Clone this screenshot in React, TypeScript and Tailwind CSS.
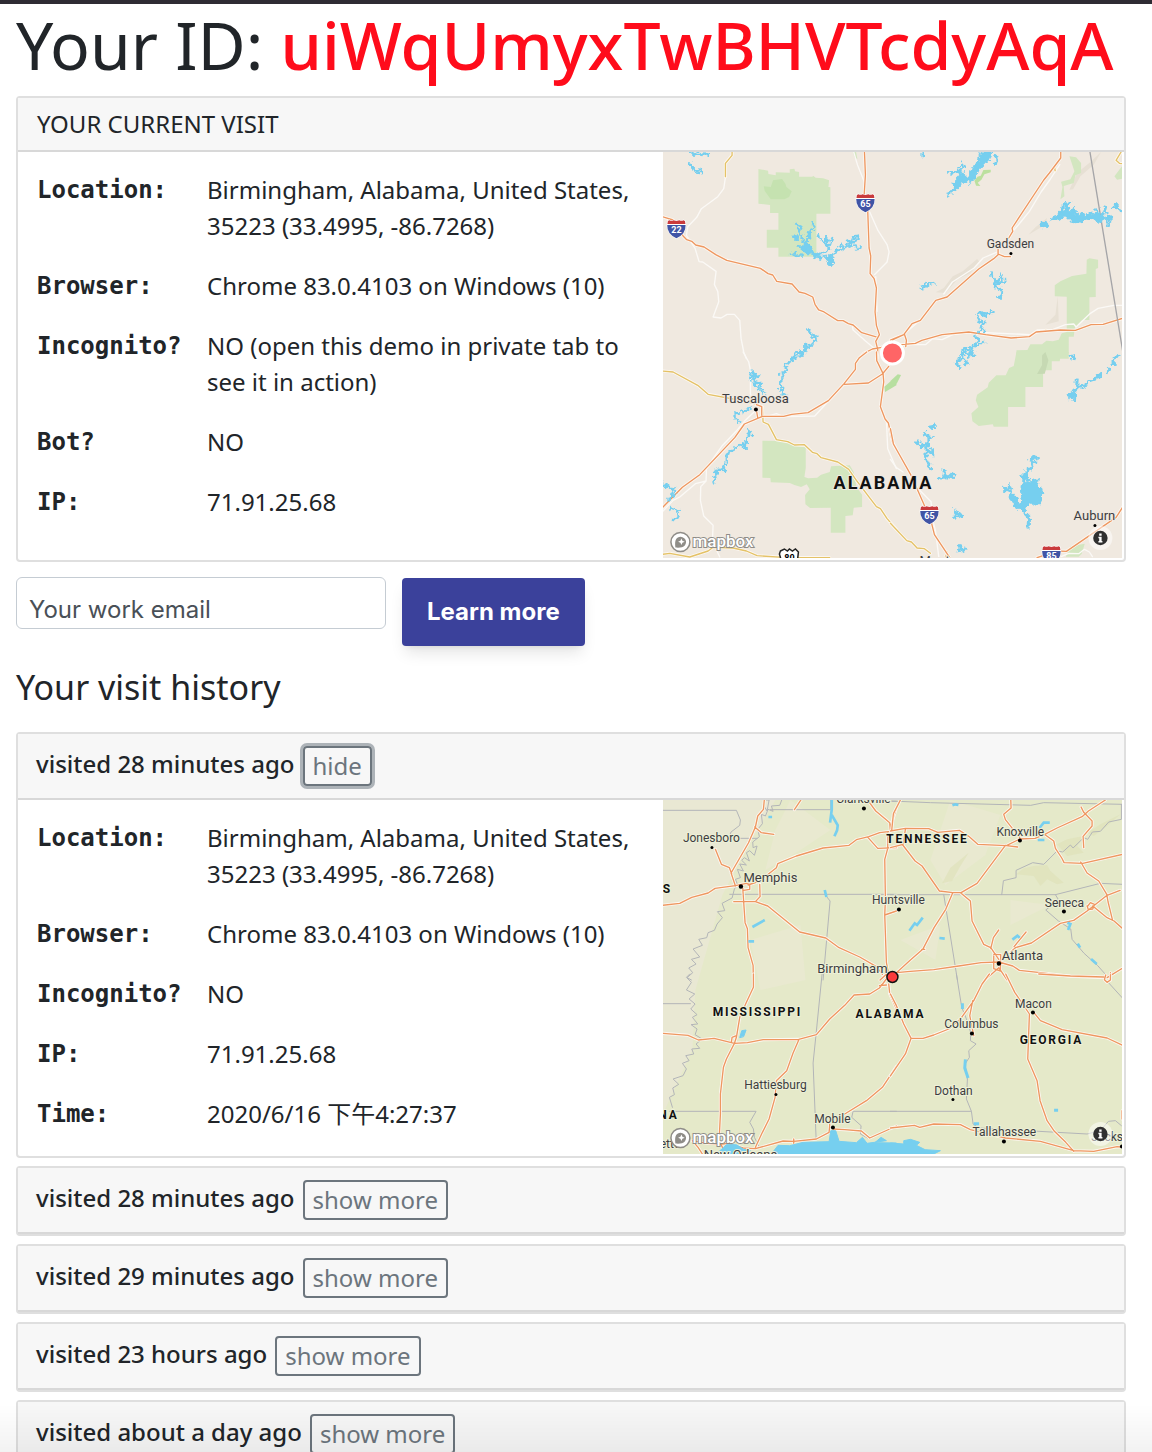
import { useState, type ReactNode } from "react";

/* ---------- map drawing helpers ---------- */

function Tile({ x, y, children }: { x: number; y: number; children: ReactNode }) {
  return (
    <g transform={`translate(${x} ${y}) scale(0.33333)`} fill="none" strokeLinejoin="round" strokeLinecap="round">
      {children}
    </g>
  );
}

function Roads({ d, color = "#ee9760" }: { d: string; color?: string }) {
  return (
    <>
      <path d={d} stroke="#fdf8f2" strokeWidth="9" />
      <path d={d} stroke={color} strokeWidth="4" />
    </>
  );
}

function Minor({ d }: { d: string }) {
  return <path d={d} stroke="#fbf9f6" strokeWidth="4" />;
}

function Shoreline() {
  return (
    <filter id="shoreline" filterUnits="userSpaceOnUse" x="-20" y="-20" width="800" height="720">
      <feTurbulence type="fractalNoise" baseFrequency="0.07" numOctaves="2" seed="4" />
      <feDisplacementMap in="SourceGraphic" scale="26" xChannelSelector="R" yChannelSelector="G" />
    </filter>
  );
}

function Water({ d, w = 5, rough = false }: { d: string; w?: number; rough?: boolean }) {
  return (
    <path d={d} stroke="#76cfef" strokeWidth={w} strokeLinejoin="miter" strokeLinecap="butt" filter={rough ? "url(#shoreline)" : undefined} />
  );
}

function Lake({ d, rough = false }: { d: string; rough?: boolean }) {
  return <path d={d} fill="#76cfef" stroke="#76cfef" strokeWidth="3" strokeLinejoin="miter" filter={rough ? "url(#shoreline)" : undefined} />;
}

function Park({ d, color = "#d3e6c0" }: { d: string; color?: string }) {
  return <path d={d} fill={color} />;
}

function Label({ x, y, text, size = 12, halo }: { x: number; y: number; text: string; size?: number; halo: string }) {
  return (
    <text x={x} y={y} fontSize={size} textAnchor="middle" fill="#3d3d40" stroke={halo} strokeWidth="2" paintOrder="stroke">
      {text}
    </text>
  );
}

function StateLabel({ x, y, text, size = 12, space = 1.8, halo }: { x: number; y: number; text: string; size?: number; space?: number; halo: string }) {
  return (
    <text x={x} y={y} fontSize={size} fontWeight="700" letterSpacing={space} textAnchor="middle" fill="#111" stroke={halo} strokeWidth="2" paintOrder="stroke">
      {text}
    </text>
  );
}

function Shield({ x, y, text }: { x: number; y: number; text: string }) {
  return (
    <g transform={`translate(${x} ${y})`}>
      <path d="M-9-8.500L-7-9.500Q-5-8-3-9.500L0-8.500L3-9.500Q5-8 7-9.500L9-8.500L9.800-4Q10 5 0 10Q-10 5-9.800-4Z" fill="#fff" />
      <path d="M-8.500-8L-7-8.800Q-5-7.500-3-8.800L0-8L3-8.800Q5-7.500 7-8.800L8.500-8L9-5H-9Z" fill="#c93a3c" />
      <path d="M-9.200-4H9.200Q9.500 5 0 9.300Q-9.500 5-9.200-4Z" fill="#4054a5" />
      <text y="4" fontSize="9" fontWeight="700" textAnchor="middle" fill="#fff">
        {text}
      </text>
    </g>
  );
}

function MapChrome({ y }: { y: number }) {
  return (
    <>
      <g transform={`translate(680 ${y})`}>
        <circle r="9.500" fill="#fff" stroke="#8f8d88" strokeWidth="1.500" />
        <path d="M-5 5.500C-5.500 1-5.500-2-3-4.200A5.400 5.400 0 0 1 4.600 3.200C2.500 5.500-1 5.900-5 5.500Z" fill="#8f8d88" />
        <path d="M1-3.600L2-1.300L4.300-.3L2 .8L1 3L0 .8L-2.300-.3L0-1.300Z" fill="#fff" />
      </g>
      <text x="692" y={y + 5} fontSize="17" fontWeight="500" fill="#fff" stroke="#8f8d88" strokeWidth="2" paintOrder="stroke">
        mapbox
      </text>
      <g transform={`translate(1100 ${y - 4})`}>
        <circle r="12" fill="#fff" fillOpacity="0.5" />
        <circle r="7.200" fill="#303030" />
        <path d="M-1.200-4.500H1.200V-2.300H-1.200ZM-2-1.200H1.200V3H2V4.500H-2V3H-1.200V.3H-2Z" fill="#fff" />
      </g>
    </>
  );
}

function StateMap() {
  const halo = "#f0e9e0";
  return (
    <svg viewBox="662 152 460 406" preserveAspectRatio="xMidYMid slice" className="block h-[406px] w-full" fontFamily="Roboto, sans-serif" role="img" aria-label="Map of Alabama">
      <Shoreline />
      <rect x="662" y="152" width="460" height="406" fill="#f0e9e0" />
      <Tile x={656} y={148}>
        <Park d="M306 63L335 68L336 78L358 82V73L400 74V64L414 62L416 70L428 72V86H468L470 83L478 89L500 91L518 97L516 117L522 118V197H480V326H366V299H331V245H366V195H341V171L306 167Z" />
        <Park color="#c5e2b0" d="M322 115L343 117L350 97L377 93L387 107L390 117L406 130L398 147L384 154H343L325 129Z" />
        <Park d="M590 12H599L603 34L594 28Z" />
        <Minor d="M207 88L202 122L184 146L135 182L121 208L94 236L90 262L116 301L128 341L139 342L179 370L174 410L184 430L187 461L170 507L194 510L212 499H234L250 517L254 572L262 612L270 632" />
        <Minor d="M592 12L603 50L625 105M640 192L665 248L692 290L698 312L692 342L654 380M588 536L590 546L628 580L652 600M658 386L662 490" />
        <Roads color="#e4c267" d="M227 8V22L207 46V86" />
        <Roads d="M18 206L50 216L80 264L91 275L106 280L118 291L143 297L178 320L211 337L312 361L335 377L349 381L361 400L407 408L428 432L446 436L469 447L476 470L487 486L503 492L544 518H560L576 527L590 531L616 554L664 568" />
        <Roads d="M624 8L627 80L623 145M634 190L638 300L643 324L641 377L653 392L660 420L656 492L660 532L669 560L658 580L664 605L662 632M608 632L622 616L648 603L676 598L720 568" />
        <Lake rough d="M408 265L420 263L427 270L418 276ZM430 300L448 288L466 301L476 318L484 313L490 325L477 335L470 322L450 315ZM500 324L523 327L535 338L520 350L510 338Z" />
        <Water rough w={7} d="M415 222L424 237L434 242L429 259L440 263L438 276L455 294L467 307M470 225L462 225M472 225L469 248L457 256L459 273L445 285L451 300L440 306M485 254L490 271L503 281L512 292L520 302L511 306L486 325M510 261L509 280L526 272L522 290L510 292M516 335L533 322L541 310L553 305L546 292L554 287L561 298L580 292L589 279L601 278L607 266L592 268L584 281L569 286M587 293L600 292L602 304L618 301M614 290L607 303M404 320L412 315L420 323L426 319L440 320" />
        <Water rough w={7} d="M96 15L106 12L113 20L123 14L136 20L145 15L161 22M101 43L105 58L112 60L119 73L136 76M109 47L105 66M114 61L130 68" />
        <Water rough w={8} d="M455 542L462 550L466 562L476 567L479 580L461 590L457 600L447 593L447 606L434 607L440 620L428 616L414 617L412 630" />
      </Tile>
      <Tile x={890} y={148}>
        <path d="M136 433L160 420L187 385L217 370L260 333L268 342L240 375L200 395L165 435ZM414 260L436 237L470 210L465 230ZM537 125L560 75L600 42L632 12L610 50L570 85L548 124ZM465 530L495 500L502 445L505 520Z" fill="#e7e0d4" />
        <Park d="M537 25L557 28L572 45V75L555 82L550 105L520 114L522 145L510 154L516 117L512 101L540 94L552 70L543 43ZM672 85L697 52V92L680 95Z" />
        <Park d="M589 335L597 331L623 335V360L616 363V447L597 448V516H575L553 540L550 566H535V600V632H378V607L411 606L420 589H455L468 578L487 580L505 575L514 556L529 552V446L493 445V412L510 400L545 384L588 377Z" />
        <Minor d="M508 50L480 93L452 132L417 190L391 222L371 246M318 313L278 330L251 360L186 402L160 438M51 550L85 520L130 466M45 590L105 590L126 572L155 575L187 560L240 552L420 560L440 546L488 544L525 530L550 528L557 537L600 496L623 481L670 472H697" />
        <Roads color="#e4c267" d="M692 12L677 37L687 46L697 47M493 60L494 68M435 553L467 547" />
        <Roads d="M511 8V30L477 75L460 96L365 240L367 250L355 270M323 302V320L310 332L265 363L170 447L136 457L90 517L65 527L40 560L6 576M323 318L342 326H360M0 576L42 559L48 577L46 596M32 590L75 586L94 577L155 560L235 552L286 560L362 570L417 566L437 552L510 546L555 547L602 530L638 529L697 511" />
        <path d="M598 8L697 610" stroke="#a5a5a8" strokeWidth="4" />
        <Lake rough d="M274 12H308L300 30L286 45L266 65L258 83L247 97L215 105L198 126L171 148L174 136L190 117L188 104L202 92L200 80L210 72L219 88L235 87L242 60L266 40Z" />
        <Park color="#bce09f" d="M252 98L261 86L271 83L279 66L301 65V73L282 79L273 95L262 104L270 114L257 113Z" />
        <Water rough w={8} d="M170 73L201 72L225 61L215 45L204 59M225 92L242 106M315 18L321 45L311 48M97 12V28" />
        <Lake rough d="M450 228L460 221L476 228L466 242L450 237ZM510 190L526 188L521 170L534 173L536 193L551 175L557 200L570 198L585 203L606 193L628 200L640 181L637 201L662 204V220L644 211L630 220L612 216L588 213L571 222L548 225L535 209L512 212Z" />
        <Water rough w={9} d="M480 217L505 209L518 174L541 164M640 173L648 195M664 175L684 177L694 194M646 213L660 231M625 202L614 182M580 211L594 198" />
        <Water rough w={8} d="M90 418L100 409L111 413L129 406M96 424L111 418M303 370L304 387L315 402L314 420L335 424L331 448L320 448M316 402L325 390L323 407L339 407L337 388M306 481L290 506L265 492L260 506L270 522H281L277 546L264 550M250 565L264 575L254 594L235 603L219 604L213 625M260 596L283 580M235 632L244 606" />
      </Tile>
      <Tile x={656} y={352}>
        <Park d="M318 266L390 267L414 281L448 286V348L444 375L455 379L482 377L494 368L520 360L524 343L580 340L592 360L600 405L617 428V465L592 467L589 490L567 492V542H523V467L461 468L447 457L446 429L460 412L451 397L434 405L414 399L400 393L343 391L342 378L318 377Z" />
        <Minor d="M260 0L277 30L282 55V124L292 157M296 177L264 208L239 238L196 283L170 320L150 352L149 387L133 404L132 446L142 492L170 520L168 568L190 615M149 387L117 395L70 435L50 445L20 477M332 193L360 185L382 194L475 192L530 132M690 208L694 290L720 350" />
        <Roads color="#e4c267" d="M18 57L50 60L124 100L155 127L230 141L300 156M318 165L320 210L336 217L360 263L394 269L414 279L444 278L468 301L482 305L494 317L544 330L577 352L600 385L637 434L660 464L672 470L692 500L720 532M18 607L40 604L100 615L155 597L170 586L230 588L270 597L302 611L380 616L520 617" />
        <Roads d="M18 467L78 406L130 368L235 257L264 216L302 200L318 193H382L406 187L455 182L516 146L563 95L597 52V34L609 17L631 0M564 97L636 93L678 66L697 43M660 0L661 26L680 65L682 90L672 164L686 201L696 213L708 270L720 292M304 198L301 180M300 158L316 164V190" />
        <Water rough w={7} d="M279 58L290 66L286 74L302 70L290 85L303 90L309 99L320 109L327 128M284 88L294 97L312 93L306 106L318 121M450 5L430 0L426 13L413 12L410 24L394 35L384 43L388 56L375 72L374 112L384 127L372 128M286 170L261 175L249 184L237 182L238 199L246 213M275 222L277 244L289 247M279 244L272 258L275 271L264 273L267 287L248 279L235 287L229 296L211 308V329L200 344L203 354L178 353L180 373L171 378L178 398M18 391L37 407L54 409L43 425L53 430L44 444L33 439M37 475L46 468L67 475L59 501L49 501" />
        <Park color="#b7dfa0" d="M686 120L684 104L700 90L720 80V100Z" />
      </Tile>
      <Tile x={890} y={352}>
        <Park d="M378 0H535V4L510 12L508 28H484V55H458V105H405V165H353V224H310L307 217L265 222L246 208L243 184L264 165L256 145L260 128L292 106L295 92L318 70H346L356 48L370 42Z" />
        <path d="M465 0L474 25L463 65L440 66L455 39V10Z" fill="#c6d9b3" />
        <Park color="#b7dfa0" d="M0 87L22 67L32 69L20 93L0 109Z" />
        <Park d="M526 614L540 583L583 575L574 605L565 614Z" />
        <Minor d="M0 322L18 347L38 360M88 415L122 449L125 498L135 535L145 614M512 614L535 604L565 605L582 592L597 600L606 614" />
        <Roads color="#e4c267" d="M0 514L49 566L63 570L80 588L102 590L120 604M172 600L165 614" />
        <Roads d="M0 230L9 276L62 370L103 463M123 512L132 548L178 617M697 465L677 496L528 598L502 597M460 610L440 617" />
        <Lake rough d="M531 126L546 118L556 118L562 128L557 145L546 139L536 140ZM380 468L397 435L392 407L397 385L414 392L425 378L444 382L440 400L455 410L452 445L440 460L420 455L408 470L400 483L380 465L359 446V435L378 440L384 455Z" />
        <Water rough w={9} d="M551 116L572 102L587 97L601 86L620 79L634 66M561 77L559 102L572 110M653 60L655 47M668 39V27L683 8M549 25L545 8M139 219L124 222L128 236M102 237L106 250L124 256L110 270L109 290L127 305V291M75 266L90 281L111 279M111 295L108 325L115 343L124 351M143 380L162 372L175 375L182 368L191 376M151 360L162 362L167 382M190 471L202 487L221 491M189 497L217 490M447 322L428 314L421 324L433 329L419 350L404 363L410 380L392 367M395 370L407 395M338 412L352 413L357 424L373 428M350 393L365 412M360 428L380 445M401 479L415 493L413 530M206 602L209 587L224 591L214 604M255 5L234 9L221 0L217 22L235 37M220 18L196 26L204 45" />
      </Tile>
      <Label x={1010} y={248} text="Gadsden" halo={halo} />
      <circle cx="1010.500" cy="253.500" r="1.500" />
      <Label x={755} y={403} text="Tuscaloosa" size={13} halo={halo} />
      <circle cx="755.500" cy="409.500" r="2" />
      <Label x={1094} y={520} text="Auburn" size={13} halo={halo} />
      <circle cx="1094.500" cy="525.500" r="1.500" />
      <StateLabel x={883} y={489} text="ALABAMA" size={18} space={2} halo={halo} />
      <Label x={956} y={565} text="Montgomery" size={13} halo={halo} />
      <Shield x={676} y={229} text="22" />
      <Shield x={865} y={203} text="65" />
      <Shield x={929} y={515} text="65" />
      <Shield x={1051} y={555} text="85" />
      <path d="M780 551L784 549L787 551L789 549L792 551L795 549L798 552L797 561H781L779 554Z" fill="#fff" stroke="#222" strokeWidth="1.500" />
      <text x="789" y="561" fontSize="9" fontWeight="700" textAnchor="middle">80</text>
      <circle cx="892" cy="353" r="11" fill="#ff6566" stroke="#fff" strokeWidth="3" />
      <MapChrome y={542} />
    </svg>
  );
}

function RegionMap() {
  const halo = "#edf0d8";
  const border = "#b3b5b8";
  return (
    <svg viewBox="662 800 460 354" preserveAspectRatio="xMidYMid slice" className="block h-[354px] w-full" fontFamily="Roboto, sans-serif" role="img" aria-label="Map of the southeastern United States">
      <rect x="662" y="800" width="460" height="354" fill="#e5e9c9" />
      <path d="M662 800H775L745 850L722 895L695 990L692 1050L662 1115Z" fill="#e9e8d3" />
      <path d="M790 800L830 830L800 850L765 870L775 830ZM950 800L1000 815L985 855L945 885L930 860ZM750 940L800 925L805 980L760 990ZM900 940L940 925L935 960ZM1010 900L1050 905L1010 925Z" fill="#e9e9d0" />
      <Tile x={656} y={796}>
        <g stroke={border} strokeWidth="3">
          <path d="M18 43H240L252 72L250 88L224 108L216 125M247 127H302M342 41H523V12M702 16H720M220 295H720M505 295L521 315L500 552" />
          <path d="M376 12L370 28L345 30L350 46L335 40L327 60L315 55L318 83L304 100L309 122L289 138L290 155L302 150L294 178L280 164L270 170L279 195L264 185L256 193L270 207L250 204L261 225L243 220L252 245L237 250L244 267L234 279L227 306L197 322L205 344L183 347L198 365L182 384L174 403L155 410L151 425L127 430L138 448L110 459L130 483L105 490L119 504L97 516L109 530L92 545L105 552" />
        </g>
        <path d="M330 12L338 12L332 45L321 27" stroke={border} strokeWidth="3" />
        <Roads d="M324 8L321 40L304 60L297 93L276 141L224 231L237 270M177 160L195 205L219 215L226 234M295 93L315 110L352 115M436 8L414 41M18 328L70 322L106 304L155 291L176 277L237 269L270 262L280 265V280L261 283M275 267L310 255L360 215L364 203L420 180L500 156L578 148L600 131L637 122L670 110L702 106M310 265L311 302L297 317H232M259 276L266 380L273 398L275 455L290 508L291 552M297 317L334 330L430 408L508 426L548 455L610 483L660 512L678 535M635 14L658 45L700 80L702 106M720 36L703 90M635 125L664 157L720 155M694 110V157L685 190L687 310L685 357L690 500L695 525M685 357L720 345M671 552L690 535" />
        <Water w={8} d="M526 12V40L521 80M526 57L544 88L542 103L534 121M288 393L325 372M336 63H347M276 436H293M505 282L510 303" />
      </Tile>
      <Tile x={890} y={796}>
        <path d="M377 235L400 217L430 210L470 207L480 225L520 260L500 265L470 250L450 270L430 240ZM500 145L530 130L580 120L560 150L580 170L530 180ZM590 110L630 85L690 55L650 90L610 120ZM155 262L180 215L235 170L210 210L185 255Z" fill="#dde1b7" opacity="0.6" />
        <g stroke={border} strokeWidth="3">
          <path d="M0 15L120 20L421 28L460 20L697 25M0 296H495L504 311L485 319L480 331L466 342L504 375L541 399L545 430L581 472L622 509L660 552M160 296L201 552" />
          <path d="M334 296L339 254L377 245V223L427 200L460 205L500 165L517 168L540 147L548 156L580 125L592 130L606 108L630 106L655 78L693 70V25M495 296L630 262L697 265" />
        </g>
        <Roads d="M32 8L9 53L4 102M0 105L45 97L115 98L142 109L207 103L235 121L262 145L348 149L388 129L434 127L463 115L500 96L575 62L594 45L645 12M361 8L362 36L340 55L345 71L388 125M572 33L580 49L605 75V90L578 121L580 155M348 149L382 153M465 117L490 135L495 157L514 186L521 200L577 202L697 175M571 198L590 231L625 255L649 295L653 318L666 371M37 147L74 195L95 210L147 285L187 290H212L260 262L345 148M212 292L240 315L245 375L280 445L301 455L325 490M187 290L166 340L131 395L97 460L60 492L18 530M0 155L38 145L45 99M301 458L309 425L325 402M371 452L407 408M324 500L375 455L423 441L510 382L550 373L590 345L650 298L689 283M592 330L600 320L612 325L607 339L594 341L590 330M607 330L650 365L671 375L697 398M18 530L60 526L130 521L205 510L272 500L325 498L367 510L387 523L450 530L540 541L650 545L697 516M94 460H103M284 552L325 515L350 552M310 475L331 476L330 525L310 518V480M660 530V552" />
        <Water w={8} d="M186 28L195 25L204 27M447 96L460 80L478 80M442 132H462M57 404L73 382L80 387L97 365M147 426L163 428M366 431L381 419L388 425M531 380L540 384L533 402M562 443L569 455M602 489L619 504" />
      </Tile>
      <Tile x={656} y={974}>
        <g stroke={border} strokeWidth="3">
          <path d="M18 89H102M497 0L479 180L470 267L479 492M40 412H299L280 445L291 465L294 490L307 517M720 412H590L586 430L614 455L612 480L633 492" />
          <path d="M100 0L90 10L105 25L90 48L115 60L98 75L116 90L103 105L122 122L108 130L124 150L104 152L122 165L116 182L137 195L119 210L130 223L106 225L112 240L88 245L98 260L78 268L90 285L80 305L50 315L67 331L49 342L54 362L39 370L48 400" />
        </g>
        <Roads d="M291 0V40L270 85L250 130L240 190L234 208L210 255L201 280L192 360V420L188 500L204 532M18 178L95 184L126 198L173 193L234 208L273 206L320 197L427 196L480 182L520 135L565 94L593 63L640 60L669 42L690 15M427 198L410 237L391 290L360 320L356 370L338 435L318 475L297 520M225 204L227 190L240 185M669 35L690 33M697 30L700 60L720 104M720 277L678 340L630 380L565 420M530 465L565 467L615 471L640 492L720 456M520 450L518 475L480 495L412 502L380 501L297 524L260 522L214 508L200 510L152 508L108 500L125 520L138 540M412 495V508" />
        <Lake d="M250 190L256 170L269 168L262 187ZM180 540L210 512H240L262 526L282 530L270 540H345L365 514L400 515L440 505L518 503L523 470H538L548 502L600 506L618 490L632 508L690 500L674 490L655 506L720 507V540Z" />
      </Tile>
      <Tile x={890} y={974}>
        <g stroke={border} strokeWidth="3">
          <path d="M198 0L214 100L228 135L241 176L240 200L257 210L235 230L237 250L224 270L231 315L228 375L243 412L248 450L265 462L590 480L630 470L654 442L675 440L693 455M0 412H242M656 28L697 73" />
        </g>
        <Roads d="M297 0L275 30L250 80L210 135L175 165L130 183L98 193H62L40 150L18 95L0 60M62 193L45 240L0 306M346 0L373 55L417 120L412 255L440 320L449 380L470 440L492 472L526 505L550 532M430 115L450 140L515 167L650 192L697 214M247 80L238 125L250 185M445 0L540 6L640 9M646 3L642 17L650 25L660 18V2M0 462L72 454L88 460L130 450L210 452L240 467L345 492L450 502L550 530L610 532L680 518L697 520M695 410V435" />
        <Water w={9} d="M216 88V105M225 256L223 282L233 312M250 449H266M491 409H503" />
        <Lake d="M0 540V507L40 510V500L60 496L88 505L78 514L104 527L150 530L130 540Z" />
      </Tile>
      <Label x={863} y={803} text="Clarksville" halo={halo} />
      <Label x={711} y={842} text="Jonesboro" halo={halo} />
      <Label x={770} y={882} text="Memphis" size={13} halo={halo} />
      <Label x={898} y={904} text="Huntsville" halo={halo} />
      <Label x={1020} y={836} text="Knoxville" halo={halo} />
      <Label x={1064} y={907} text="Seneca" halo={halo} />
      <Label x={1022} y={960} text="Atlanta" size={13} halo={halo} />
      <Label x={852} y={973} text="Birmingham" size={13} halo={halo} />
      <Label x={1033} y={1008} text="Macon" halo={halo} />
      <Label x={971} y={1028} text="Columbus" halo={halo} />
      <Label x={953} y={1095} text="Dothan" halo={halo} />
      <Label x={775} y={1089} text="Hattiesburg" halo={halo} />
      <Label x={832} y={1123} text="Mobile" halo={halo} />
      <Label x={1004} y={1136} text="Tallahassee" halo={halo} />
      <Label x={740} y={1159} text="New Orleans" size={13} halo={halo} />
      <Label x={1124} y={1141} text="Jacksonville" halo={halo} />
      <Label x={655} y={1148} text="Lafayette" halo={halo} />
      <g fill="#000">
        <circle cx="863.500" cy="808.500" r="2" />
        <circle cx="711.500" cy="847.500" r="1.500" />
        <circle cx="740.500" cy="886.500" r="2.200" />
        <circle cx="898.500" cy="909.500" r="2" />
        <circle cx="1019.500" cy="840.500" r="2" />
        <circle cx="1063.500" cy="911.500" r="2" />
        <circle cx="998.500" cy="963.500" r="2.200" />
        <circle cx="1032.500" cy="1012.500" r="2" />
        <circle cx="971.500" cy="1033.500" r="2" />
        <circle cx="952.500" cy="1099.500" r="1.500" />
        <circle cx="775.500" cy="1094.500" r="1.500" />
        <circle cx="832.500" cy="1127.500" r="2" />
        <circle cx="1003.500" cy="1141.500" r="2" />
        <circle cx="1121.500" cy="1146.500" r="2" />
      </g>
      <StateLabel x={927} y={843} text="TENNESSEE" halo={halo} />
      <StateLabel x={757} y={1016} text="MISSISSIPPI" halo={halo} />
      <StateLabel x={890} y={1018} text="ALABAMA" halo={halo} />
      <StateLabel x={1051} y={1044} text="GEORGIA" halo={halo} />
      <StateLabel x={667} y={893} text="S" halo={halo} />
      <StateLabel x={668} y={1119} text="NA" halo={halo} />
      <circle cx="892" cy="977" r="5.500" fill="#fb3b3c" stroke="#111" strokeWidth="1.500" />
      <MapChrome y={1138} />
    </svg>
  );
}

/* ---------- page ---------- */

type Row = [string, string];

const currentVisit: Row[] = [
  ["Location:", "Birmingham, Alabama, United States, 35223 (33.4995, -86.7268)"],
  ["Browser:", "Chrome 83.0.4103 on Windows (10)"],
  ["Incognito?", "NO (open this demo in private tab to see it in action)"],
  ["Bot?", "NO"],
  ["IP:", "71.91.25.68"],
];

const pastVisit: Row[] = [
  ["Location:", "Birmingham, Alabama, United States, 35223 (33.4995, -86.7268)"],
  ["Browser:", "Chrome 83.0.4103 on Windows (10)"],
  ["Incognito?", "NO"],
  ["IP:", "71.91.25.68"],
  ["Time:", "2020/6/16 下午4:27:37"],
];

const history = ["28 minutes ago", "28 minutes ago", "29 minutes ago", "23 hours ago", "about a day ago"];

function Details({ rows, map }: { rows: Row[]; map: ReactNode }) {
  return (
    <div className="grid grid-cols-[minmax(0,7fr)_minmax(0,5fr)]">
      <dl className="pt-5 pl-[19px]">
        {rows.map(([label, value]) => (
          <div key={label} className="mb-6 flex">
            <dt className="w-[170px] shrink-0 font-['DejaVu_Sans_Mono',monospace] font-bold">{label}</dt>
            <dd className="min-w-0">{value}</dd>
          </div>
        ))}
      </dl>
      <div className="pr-0.5 pb-0.5">{map}</div>
    </div>
  );
}

function VisitCard({ when, initiallyOpen }: { when: string; initiallyOpen: boolean }) {
  const [open, setOpen] = useState(initiallyOpen);
  return (
    <li className="rounded border-2 border-[#dfdfdf] bg-white">
      <div className="flex items-center gap-2 border-b-2 border-[#d8d8d8] bg-[#f7f7f7] py-3 pl-[18px]">
        <span className="-mt-1 font-medium">visited {when}</span>
        <button
          type="button"
          aria-expanded={open}
          onClick={() => setOpen(!open)}
          className={
            open
              ? "h-10 rounded-sm border-2 border-[#6c757d] px-2 leading-8 text-[#6c757d] ring-3 ring-[#adb3b8]"
              : "h-10 rounded-sm border-2 border-[#6c757d] px-2 leading-8 text-[#6c757d]"
          }
        >
          {open ? "hide" : "show more"}
        </button>
      </div>
      {open && <Details rows={pastVisit} map={<RegionMap />} />}
    </li>
  );
}

export default function App() {
  return (
    <div className="h-screen overflow-hidden border-t-4 border-[#2e2b33] bg-white font-['Noto_Sans','Noto_Sans_CJK_SC',sans-serif] text-2xl leading-9 text-[#212529]">
      <main className="pr-[26px] pl-4">
        <h1 className="h-[92px] text-[66px] leading-[80px] whitespace-pre">
          Your ID: <span className="font-medium text-[#ff0c1b]">uiWqUmyxTwBHVTcdyAqA</span>
        </h1>
        <section className="rounded border-2 border-[#dfdfdf]">
          <h2 className="border-b-2 border-[#d8d8d8] bg-[#f7f7f7] px-[19px] py-2">YOUR CURRENT VISIT</h2>
          <Details rows={currentVisit} map={<StateMap />} />
        </section>
        <form className="mt-4 flex items-start gap-4 font-[Inter,sans-serif]" onSubmit={(e) => e.preventDefault()}>
          <input
            type="email"
            aria-label="Your work email"
            placeholder="Your work email"
            className="-mt-px h-[52px] w-[370px] rounded-md border border-[#c5ccd3] px-3 pt-3 placeholder:text-[#495057]"
          />
          <button type="submit" className="h-[68px] rounded bg-[#3b419b] px-[25px] font-bold text-white shadow-lg">
            Learn more
          </button>
        </form>
        <h2 className="mt-5 mb-6 text-[34px] leading-[42px]">Your visit history</h2>
        <ul className="flex flex-col gap-2">
          {history.map((when, i) => (
            <VisitCard key={i} when={when} initiallyOpen={i === 0} />
          ))}
        </ul>
      </main>
      <div className="pointer-events-none fixed inset-x-0 bottom-0 h-12 bg-linear-to-b from-transparent to-black/5" />
    </div>
  );
}
